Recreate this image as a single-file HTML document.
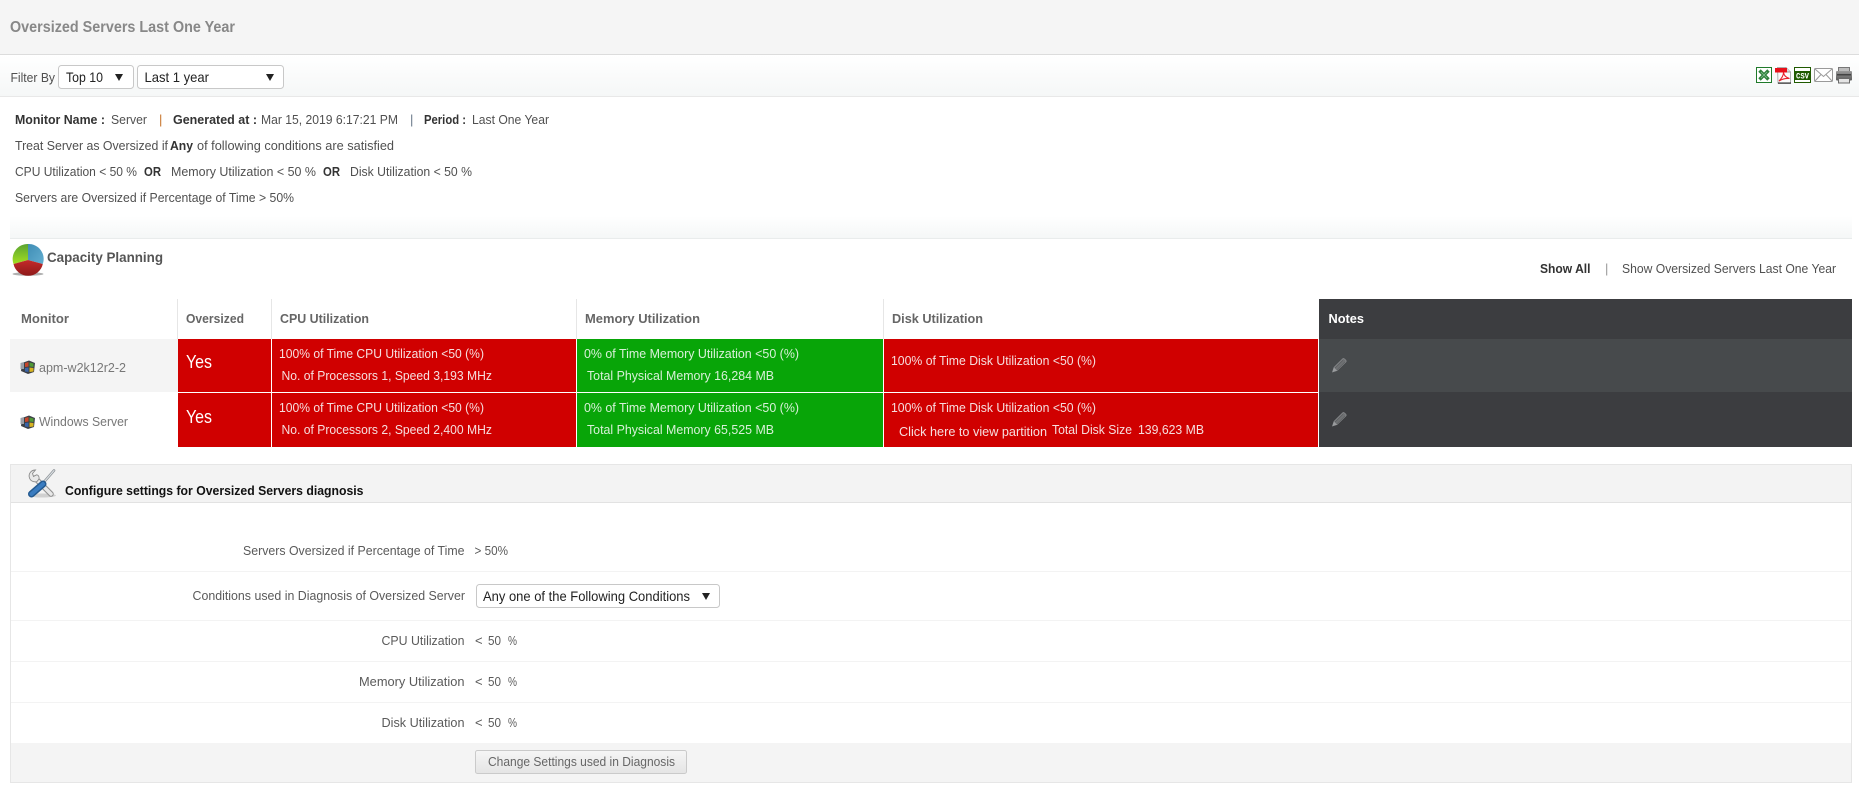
<!DOCTYPE html>
<html lang="en">
<head>
<meta charset="utf-8">
<title>Oversized Servers Last One Year</title>
<style>
html,body{margin:0;padding:0;background:#fff;width:1859px;height:792px;overflow:hidden}
svg{display:block}
text{font-family:"Liberation Sans",sans-serif;font-size:13px;fill:#505050;white-space:pre}
.b{font-weight:bold}
.h{font-weight:bold;fill:#666;font-size:13px}
.w{fill:#f6dede}
.g{fill:#d8f0d8}
.l{fill:#5a5a5a}
</style>
</head>
<body>
<svg xmlns="http://www.w3.org/2000/svg" width="1859" height="792" viewBox="0 0 1859 792">
<defs>
<linearGradient id="fade" x1="0" y1="0" x2="0" y2="1"><stop offset="0" stop-color="#fff"/><stop offset="1" stop-color="#f5f7f7"/></linearGradient>
<linearGradient id="btn" x1="0" y1="0" x2="0" y2="1"><stop offset="0" stop-color="#f6f6f6"/><stop offset="1" stop-color="#e4e4e4"/></linearGradient>
<linearGradient id="pg" x1="0" y1="0" x2="0" y2="1"><stop offset="0" stop-color="#5aa332"/><stop offset="1" stop-color="#a4e020"/></linearGradient>
<linearGradient id="pb" x1="0" y1="0" x2="1" y2="1"><stop offset="0" stop-color="#3f8db5"/><stop offset="1" stop-color="#63aed0"/></linearGradient>
<linearGradient id="pr" x1="0" y1="0" x2="0" y2="1"><stop offset="0" stop-color="#c42a2a"/><stop offset="1" stop-color="#8e1a1a"/></linearGradient>
<linearGradient id="prn" x1="0" y1="0" x2="0" y2="1"><stop offset="0" stop-color="#9a9a9a"/><stop offset="1" stop-color="#5a5a5a"/></linearGradient>
<g id="win">
<path d="M2,3 L9,0.5 L15,3 L14,12 L8,14 L1,11 Z" fill="#3c4048"/>
<path d="M0.5,3 L4,2 L4,9 L0.5,9 Z" fill="#9a9fa8"/>
<path d="M5,3 L8.5,2 L8.5,6.5 L5,7 Z" fill="#c8462a"/>
<path d="M9.5,2.5 L13.5,3.5 L13.5,7 L9.5,6.5 Z" fill="#4f9a36"/>
<path d="M5,8 L8.5,7.5 L8.5,12 L5,11.5 Z" fill="#3a64a8"/>
<path d="M9.5,7.5 L13.5,8 L13.5,11.5 L9.5,12 Z" fill="#d8b420"/>
</g>
<g id="pen">
<path d="M0.5,14 L2,9.5 L10.5,1 Q11.5,0 12.8,1.2 L13.8,2.2 Q14.6,3.2 13.8,4 L5,12.6 Z" fill="#6f7173" stroke="#8a8c8e" stroke-width="0.7"/>
<path d="M3,10 L11,2.2 M5,12 L13,4" stroke="#5c5e60" stroke-width="0.7" fill="none"/>
<path d="M0.5,14 L2,9.5 L5,12.6 Z" fill="#9a9c9e"/>
</g>
</defs>

<!-- Title bar -->
<rect x="0" y="0" width="1859" height="54" fill="#f5f5f5"/>
<rect x="0" y="54" width="1859" height="1" fill="#dcdcdc"/>
<text x="10" y="32" class="b" style="font-size:15.5px;fill:#888" textLength="225" lengthAdjust="spacingAndGlyphs">Oversized Servers Last One Year</text>

<!-- Filter bar -->
<rect x="0" y="55" width="1859" height="41" fill="url(#fade)"/>
<rect x="0" y="96" width="1859" height="1" fill="#e8e8e8"/>
<text x="10.5" y="82" textLength="44.5" lengthAdjust="spacingAndGlyphs">Filter By</text>
<rect x="58.5" y="65.5" width="75" height="23" rx="3" fill="#fff" stroke="#c8c8c8"/>
<text x="66" y="82" style="font-size:14px;fill:#222" textLength="37" lengthAdjust="spacingAndGlyphs">Top 10</text>
<path d="M115,74 L123,74 L119,81 Z" fill="#222"/>
<rect x="137.5" y="65.5" width="146" height="23" rx="3" fill="#fff" stroke="#c8c8c8"/>
<text x="144.5" y="82" style="font-size:14px;fill:#222" textLength="64.5" lengthAdjust="spacingAndGlyphs">Last 1 year</text>
<path d="M266,74 L274,74 L270,81 Z" fill="#222"/>

<!-- Export icons -->
<rect x="1756.5" y="67.5" width="15" height="15" fill="#fff" stroke="#1f7a2a"/>
<path d="M1759.5,70.5 L1768.5,79.5 M1768.5,70.500 L1759.500,79.500" stroke="#2f7f3c" stroke-width="3.4" fill="none"/>
<path d="M1761,72 L1767,78 M1767,72 L1761,78" stroke="#8cc79a" stroke-width="0.7" fill="none"/>

<path d="M1777.5,67.5 H1786 L1790.5,72 V83 H1778 Z" fill="#fbfbfb" stroke="#b0b0b0"/>
<path d="M1786,67.5 V72 H1790.5" fill="#ddd" stroke="#999"/>
<rect x="1775" y="68" width="12" height="4.5" fill="#e8101a"/>
<path d="M1779,81 C1782,78 1783.500,75 1783.500,72.500 C1784,75.500 1786,77.500 1789.500,78.500 C1786,78.200 1782.500,78.800 1779,81 Z" fill="none" stroke="#e8202a" stroke-width="1.100"/>
<rect x="1778" y="82.500" width="13" height="1.200" fill="#222"/>

<rect x="1794.500" y="67.500" width="16" height="15" fill="#fff" stroke="#1f5a00"/>
<rect x="1795" y="71" width="15" height="9" fill="#1f5a00"/>
<text x="1796" y="78.500" style="font-family:'Liberation Mono',monospace;font-size:8.500px;font-weight:bold;fill:#fff" textLength="13" lengthAdjust="spacingAndGlyphs">CSV</text>

<rect x="1814.500" y="68.500" width="18" height="13" rx="1" fill="#fff" stroke="#9a9a9a"/>
<path d="M1815,69 L1823.500,76.500 L1832,69 M1815,81 L1821,74.500 M1832,81 L1826,74.500" stroke="#9a9a9a" fill="none"/>

<rect x="1838.500" y="67.500" width="11" height="5" fill="#bdbdbd" stroke="#777"/>
<rect x="1836" y="71" width="16" height="9.500" rx="1" fill="url(#prn)"/>
<rect x="1838.500" y="78.500" width="11" height="4.500" fill="#e4e4e4" stroke="#6a6a6a"/>
<rect x="1837" y="74" width="14" height="1.500" fill="#444"/>

<!-- Info block -->
<text x="15" y="124" class="b" style="fill:#333" textLength="90" lengthAdjust="spacingAndGlyphs">Monitor Name :</text>
<text x="111" y="124" textLength="36" lengthAdjust="spacingAndGlyphs">Server</text>
<text x="159" y="124" style="fill:#c8742c">|</text>
<text x="173" y="124" class="b" style="fill:#333" textLength="84" lengthAdjust="spacingAndGlyphs">Generated at :</text>
<text x="261" y="124" textLength="137" lengthAdjust="spacingAndGlyphs">Mar 15, 2019 6:17:21 PM</text>
<text x="410" y="124" style="fill:#6a7a8a">|</text>
<text x="424" y="124" class="b" style="fill:#333" textLength="42" lengthAdjust="spacingAndGlyphs">Period :</text>
<text x="472" y="124" textLength="77" lengthAdjust="spacingAndGlyphs">Last One Year</text>

<text x="15" y="150" textLength="153" lengthAdjust="spacingAndGlyphs">Treat Server as Oversized if</text>
<text x="170" y="150" class="b" style="fill:#333" textLength="23" lengthAdjust="spacingAndGlyphs">Any</text>
<text x="197" y="150" textLength="197" lengthAdjust="spacingAndGlyphs">of following conditions are satisfied</text>

<text x="15" y="176" textLength="122" lengthAdjust="spacingAndGlyphs">CPU Utilization &lt; 50 %</text>
<text x="144" y="176" class="b" style="fill:#333" textLength="17" lengthAdjust="spacingAndGlyphs">OR</text>
<text x="171" y="176" textLength="145" lengthAdjust="spacingAndGlyphs">Memory Utilization &lt; 50 %</text>
<text x="323" y="176" class="b" style="fill:#333" textLength="17" lengthAdjust="spacingAndGlyphs">OR</text>
<text x="350" y="176" textLength="122" lengthAdjust="spacingAndGlyphs">Disk Utilization &lt; 50 %</text>

<text x="15" y="202" textLength="279" lengthAdjust="spacingAndGlyphs">Servers are Oversized if Percentage of Time &gt; 50%</text>

<rect x="10" y="216" width="1842" height="22" fill="url(#fade)"/>
<rect x="10" y="238" width="1842" height="1" fill="#e9ecec"/>

<!-- Capacity planning heading -->
<ellipse cx="28" cy="274" rx="15.500" ry="1.800" fill="#b0b0b0"/>
<path d="M28,260 L28,244 A15,15 0 0 0 13.500,264 Z" fill="url(#pg)"/>
<path d="M28,260 L28,244 A15,15 0 0 1 42.800,264 Z" fill="url(#pb)"/>
<path d="M28,260 L13.500,264 A15,15 0 0 0 42.800,264 Z" fill="url(#pr)"/>
<text x="47" y="262" class="b" style="font-size:14px;fill:#555" textLength="116" lengthAdjust="spacingAndGlyphs">Capacity Planning</text>

<text x="1540" y="273" class="b" style="fill:#333" textLength="50.500" lengthAdjust="spacingAndGlyphs">Show All</text>
<text x="1605" y="273" style="fill:#999">|</text>
<text x="1622" y="273" textLength="214" lengthAdjust="spacingAndGlyphs">Show Oversized Servers Last One Year</text>

<!-- Table header -->
<rect x="177" y="299" width="1" height="40" fill="#e6e6e6"/>
<rect x="271" y="299" width="1" height="40" fill="#e6e6e6"/>
<rect x="576" y="299" width="1" height="40" fill="#e6e6e6"/>
<rect x="883" y="299" width="1" height="40" fill="#e6e6e6"/>
<text x="21" y="323" class="h" textLength="48" lengthAdjust="spacingAndGlyphs">Monitor</text>
<text x="186" y="323" class="h" textLength="58" lengthAdjust="spacingAndGlyphs">Oversized</text>
<text x="280" y="323" class="h" textLength="89" lengthAdjust="spacingAndGlyphs">CPU Utilization</text>
<text x="585" y="323" class="h" textLength="115" lengthAdjust="spacingAndGlyphs">Memory Utilization</text>
<text x="892" y="323" class="h" textLength="91" lengthAdjust="spacingAndGlyphs">Disk Utilization</text>
<rect x="1319" y="299" width="533" height="40" fill="#3c3d40"/>
<text x="1328.500" y="323" class="b" style="fill:#fff" textLength="35.500" lengthAdjust="spacingAndGlyphs">Notes</text>

<!-- Table row 1 -->
<rect x="10" y="339" width="168" height="53" fill="#f4f4f4"/>
<use href="#win" x="20" y="360"/>
<text x="39" y="372" style="fill:#777" textLength="87" lengthAdjust="spacingAndGlyphs">apm-w2k12r2-2</text>
<rect x="178" y="339" width="93" height="53" fill="#d00000"/>
<rect x="272" y="339" width="304" height="53" fill="#d00000"/>
<rect x="577" y="339" width="306" height="53" fill="#08a508"/>
<rect x="884" y="339" width="434" height="53" fill="#d00000"/>
<rect x="1319" y="339" width="533" height="53" fill="#474a4c"/>
<text x="186" y="368" style="font-size:18px;fill:#fff" textLength="26" lengthAdjust="spacingAndGlyphs">Yes</text>
<text x="279" y="358" class="w" textLength="205" lengthAdjust="spacingAndGlyphs">100% of Time CPU Utilization &lt;50 (%)</text>
<text x="281.500" y="380" class="w" textLength="210.500" lengthAdjust="spacingAndGlyphs">No. of Processors 1, Speed 3,193 MHz</text>
<text x="584" y="358" class="g" textLength="215" lengthAdjust="spacingAndGlyphs">0% of Time Memory Utilization &lt;50 (%)</text>
<text x="587" y="380" class="g" textLength="187" lengthAdjust="spacingAndGlyphs">Total Physical Memory 16,284 MB</text>
<text x="891" y="365" class="w" textLength="205" lengthAdjust="spacingAndGlyphs">100% of Time Disk Utilization &lt;50 (%)</text>
<use href="#pen" x="1332" y="358"/>

<!-- Table row 2 -->
<use href="#win" x="20" y="415"/>
<text x="39" y="426" style="fill:#777" textLength="89" lengthAdjust="spacingAndGlyphs">Windows Server</text>
<rect x="178" y="393" width="93" height="54" fill="#d00000"/>
<rect x="272" y="393" width="304" height="54" fill="#d00000"/>
<rect x="577" y="393" width="306" height="54" fill="#08a508"/>
<rect x="884" y="393" width="434" height="54" fill="#d00000"/>
<rect x="1319" y="392" width="533" height="55" fill="#3c3d40"/>
<text x="186" y="423" style="font-size:18px;fill:#fff" textLength="26" lengthAdjust="spacingAndGlyphs">Yes</text>
<text x="279" y="412" class="w" textLength="205" lengthAdjust="spacingAndGlyphs">100% of Time CPU Utilization &lt;50 (%)</text>
<text x="281.500" y="434" class="w" textLength="210.500" lengthAdjust="spacingAndGlyphs">No. of Processors 2, Speed 2,400 MHz</text>
<text x="584" y="412" class="g" textLength="215" lengthAdjust="spacingAndGlyphs">0% of Time Memory Utilization &lt;50 (%)</text>
<text x="587" y="434" class="g" textLength="187" lengthAdjust="spacingAndGlyphs">Total Physical Memory 65,525 MB</text>
<text x="891" y="412" class="w" textLength="205" lengthAdjust="spacingAndGlyphs">100% of Time Disk Utilization &lt;50 (%)</text>
<text x="899" y="436" class="w" textLength="148" lengthAdjust="spacingAndGlyphs">Click here to view partition</text>
<text x="1052" y="434" class="w" textLength="80" lengthAdjust="spacingAndGlyphs">Total Disk Size</text>
<text x="1138" y="434" class="w" textLength="66" lengthAdjust="spacingAndGlyphs">139,623 MB</text>
<use href="#pen" x="1332" y="412"/>

<!-- Configure panel -->
<rect x="10.500" y="464.500" width="1841" height="318" fill="#fff" stroke="#e6e6e6"/>
<rect x="11" y="465" width="1840" height="37" fill="#f3f3f3"/>
<rect x="11" y="502" width="1840" height="1" fill="#e2e2e2"/>
<ellipse cx="42" cy="495.500" rx="14" ry="2" fill="#d0d0d0"/>
<!-- wrench -->
<path d="M35,478 L51,494" stroke="#8f8f8f" stroke-width="5.500" stroke-linecap="round" fill="none"/>
<path d="M35,478 L51,494" stroke="#e8e8e8" stroke-width="3.500" stroke-linecap="round" fill="none"/>
<path d="M35.500,470 C31,470 28,474 29.500,478 C30.500,481 34,482.500 37,481.500 L39,479 C39.500,476 38,475 36.500,474.800 L33.500,476.500 L32.500,473.500 Z" fill="#e8e8e8" stroke="#8a8a8a" stroke-width="0.900"/>
<!-- screwdriver -->
<path d="M54,470.500 L44,482" stroke="#8f959a" stroke-width="2.600" stroke-linecap="round" fill="none"/>
<path d="M54,470.500 L44,482" stroke="#dfe3e6" stroke-width="1" stroke-linecap="round" fill="none"/>
<path d="M43,484 L31.500,494" stroke="#245a90" stroke-width="7" stroke-linecap="round" fill="none"/>
<path d="M43,484 L31.500,494" stroke="#3a7cc0" stroke-width="4" stroke-linecap="round" fill="none"/>
<text x="65" y="495" class="b" style="fill:#111" textLength="298.500" lengthAdjust="spacingAndGlyphs">Configure settings for Oversized Servers diagnosis</text>

<rect x="11" y="571" width="1840" height="1" fill="#f3f3f3"/>
<rect x="11" y="620" width="1840" height="1" fill="#f3f3f3"/>
<rect x="11" y="661" width="1840" height="1" fill="#f3f3f3"/>
<rect x="11" y="702" width="1840" height="1" fill="#f3f3f3"/>

<text x="243" y="555" class="l" textLength="221.500" lengthAdjust="spacingAndGlyphs">Servers Oversized if Percentage of Time</text>
<text x="474.500" y="555" class="l" textLength="33.500" lengthAdjust="spacingAndGlyphs">&gt; 50%</text>

<text x="192.500" y="600" class="l" textLength="272.500" lengthAdjust="spacingAndGlyphs">Conditions used in Diagnosis of Oversized Server</text>
<rect x="476.500" y="584.500" width="243" height="23" rx="3" fill="#fff" stroke="#c8c8c8"/>
<text x="483" y="601" style="font-size:14px;fill:#222" textLength="207" lengthAdjust="spacingAndGlyphs">Any one of the Following Conditions</text>
<path d="M702,593 L710,593 L706,600 Z" fill="#222"/>

<text x="381.500" y="645" class="l" textLength="83" lengthAdjust="spacingAndGlyphs">CPU Utilization</text>
<text x="475" y="645" class="l">&lt;</text>
<text x="488" y="645" class="l" textLength="13" lengthAdjust="spacingAndGlyphs">50</text>
<text x="508" y="645" class="l" textLength="9" lengthAdjust="spacingAndGlyphs">%</text>

<text x="359" y="686" class="l" textLength="105.500" lengthAdjust="spacingAndGlyphs">Memory Utilization</text>
<text x="475" y="686" class="l">&lt;</text>
<text x="488" y="686" class="l" textLength="13" lengthAdjust="spacingAndGlyphs">50</text>
<text x="508" y="686" class="l" textLength="9" lengthAdjust="spacingAndGlyphs">%</text>

<text x="381.500" y="727" class="l" textLength="83" lengthAdjust="spacingAndGlyphs">Disk Utilization</text>
<text x="475" y="727" class="l">&lt;</text>
<text x="488" y="727" class="l" textLength="13" lengthAdjust="spacingAndGlyphs">50</text>
<text x="508" y="727" class="l" textLength="9" lengthAdjust="spacingAndGlyphs">%</text>

<rect x="11" y="743" width="1840" height="39" fill="#f4f4f4"/>
<rect x="475.500" y="750.500" width="211" height="23" rx="2" fill="url(#btn)" stroke="#cacaca"/>
<text x="488" y="766" style="fill:#666" textLength="187" lengthAdjust="spacingAndGlyphs">Change Settings used in Diagnosis</text>
</svg>
</body>
</html>
